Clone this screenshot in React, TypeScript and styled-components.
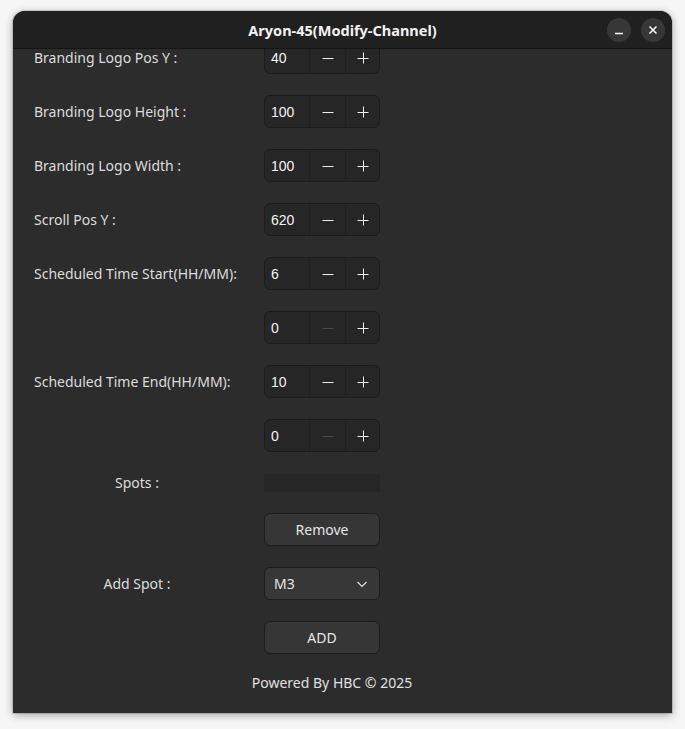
import React, { useLayoutEffect, useRef } from 'react';
import styled, { createGlobalStyle } from 'styled-components';

const GlobalStyle = createGlobalStyle`
  html, body {
    margin: 0;
    padding: 0;
    background: #f6f6f6;
    font-family: "Noto Sans", "DejaVu Sans", sans-serif;
  }
`;

const Desktop = styled.div`
  width: 685px;
  height: 729px;
  padding: 11px 13px 16px 13px;
  box-sizing: border-box;
  display: flex;
`;

const Window = styled.div`
  flex: 1;
  display: flex;
  flex-direction: column;
  border-radius: 12px 12px 0 0;
  overflow: hidden;
  background: #2c2c2c;
  box-shadow: 0 2px 8px rgba(0, 0, 0, 0.35), 0 0 0 1px rgba(0, 0, 0, 0.12);
`;

const TitleBar = styled.div`
  height: 37px;
  flex: none;
  background: #202020;
  border-bottom: 1px solid #141414;
  display: grid;
  grid-template-columns: 1fr auto 1fr;
  align-items: center;
  padding: 0 7px;
`;

const Title = styled.div`
  grid-column: 2;
  color: #f2f2f2;
  font-weight: 700;
  font-size: 14.5px;
`;

const Controls = styled.div`
  grid-column: 3;
  justify-self: end;
  display: flex;
  gap: 10px;
`;

const CircleButton = styled.button`
  width: 24px;
  height: 24px;
  border-radius: 50%;
  border: none;
  padding: 0;
  background: #373737;
  color: #ffffff;
  display: flex;
  align-items: center;
  justify-content: center;
`;

const Scroller = styled.div`
  flex: 1;
  overflow-y: auto;
  scrollbar-width: none;
  &::-webkit-scrollbar {
    display: none;
  }
`;

const Form = styled.div`
  display: grid;
  grid-template-columns: 206px 116px 1fr;
  column-gap: 24px;
  row-gap: 21px;
  padding: 22px 42px 22px 21px;
  align-items: center;
`;

const Label = styled.div<{ $center?: boolean }>`
  color: #dcdcdc;
  font-size: 14px;
  grid-column: 1;
  justify-self: ${p => (p.$center ? 'center' : 'start')};
`;

const Cell = styled.div`
  grid-column: 2;
`;

const Spin = styled.div`
  display: grid;
  grid-template-columns: 44px 36px 1fr;
  height: 33px;
  box-sizing: border-box;
  border: 1px solid #1b1b1b;
  border-radius: 6px;
  background: #262626;
  overflow: hidden;
`;

const SpinValue = styled.div`
  display: flex;
  align-items: center;
  padding-left: 6px;
  color: #f4f4f4;
  font-family: "Liberation Sans", Arial, sans-serif;
  font-size: 14px;
`;

const SpinButton = styled.div<{ $disabled?: boolean }>`
  display: flex;
  align-items: center;
  justify-content: center;
  border-left: 1px solid #1f1f1f;
  color: ${p => (p.$disabled ? '#4a4a4a' : '#f0f0f0')};
`;

const ListBox = styled.div`
  height: 18px;
  background: #262626;
`;

const Button = styled.button`
  width: 116px;
  height: 33px;
  box-sizing: border-box;
  border: 1px solid #1c1c1c;
  border-radius: 6px;
  background: #363636;
  color: #e6e6e6;
  font-family: "Noto Sans", sans-serif;
  font-size: 14px;
  padding: 0;
  display: block;
`;

const Dropdown = styled.div`
  height: 33px;
  box-sizing: border-box;
  border: 1px solid #1c1c1c;
  border-radius: 6px;
  background: #373737;
  color: #e6e6e6;
  font-size: 14px;
  display: flex;
  align-items: center;
  justify-content: space-between;
  padding: 0 11px 0 9px;
`;

const Footer = styled.div`
  grid-column: 1 / -1;
  justify-self: center;
  color: #e0e0e0;
  font-size: 14px;
  line-height: 16px;
`;

const Minus = () => (
  <svg width="12" height="12" viewBox="0 0 12 12">
    <path d="M0.5 6.5h11" stroke="currentColor" strokeWidth="1" />
  </svg>
);

const Plus = () => (
  <svg width="12" height="12" viewBox="0 0 12 12">
    <path d="M0.5 6.5h11M6.5 0.5v11" stroke="currentColor" strokeWidth="1" />
  </svg>
);

const Chevron = () => (
  <svg width="12" height="8" viewBox="0 0 12 8">
    <path d="M1.5 2l4.5 4.5L10.5 2" stroke="#e0e0e0" strokeWidth="1.2" fill="none" />
  </svg>
);

type SpinProps = { value: number; min?: boolean };

const SpinBox = ({ value, min }: SpinProps) => (
  <Spin>
    <SpinValue>{value}</SpinValue>
    <SpinButton $disabled={min}>
      <Minus />
    </SpinButton>
    <SpinButton>
      <Plus />
    </SpinButton>
  </Spin>
);

const rows: { label: string; value: number; min?: boolean }[] = [
  { label: 'Branding Logo Pos Y :', value: 40 },
  { label: 'Branding Logo Height :', value: 100 },
  { label: 'Branding Logo Width :', value: 100 },
  { label: 'Scroll Pos Y :', value: 620 },
  { label: 'Scheduled Time Start(HH/MM):', value: 6 },
  { label: '', value: 0, min: true },
  { label: 'Scheduled Time End(HH/MM):', value: 10 },
  { label: '', value: 0, min: true },
];

const App: React.FC = () => {
  const scrollRef = useRef<HTMLDivElement>(null);

  useLayoutEffect(() => {
    const el = scrollRef.current;
    if (el) el.scrollTop = el.scrollHeight;
  }, []);

  return (
    <>
      <GlobalStyle />
      <Desktop>
        <Window>
          <TitleBar>
            <Title>Aryon-45(Modify-Channel)</Title>
            <Controls>
              <CircleButton aria-label="minimize">
                <svg width="10" height="10" viewBox="0 0 10 10">
                  <path d="M1 8.5h8" stroke="#fff" strokeWidth="1.3" />
                </svg>
              </CircleButton>
              <CircleButton aria-label="close">
                <svg width="10" height="10" viewBox="0 0 10 10">
                  <path d="M1.5 1.5l7 7M8.5 1.5l-7 7" stroke="#fff" strokeWidth="1.5" />
                </svg>
              </CircleButton>
            </Controls>
          </TitleBar>
          <Scroller ref={scrollRef}>
            <Form>
              {rows.map((r, i) => (
                <React.Fragment key={i}>
                  {r.label && <Label>{r.label}</Label>}
                  <Cell>
                    <SpinBox value={r.value} min={r.min} />
                  </Cell>
                </React.Fragment>
              ))}
              <Label $center>Spots :</Label>
              <Cell>
                <ListBox />
              </Cell>
              <Cell>
                <Button>Remove</Button>
              </Cell>
              <Label $center>Add Spot :</Label>
              <Cell>
                <Dropdown>
                  <span>M3</span>
                  <Chevron />
                </Dropdown>
              </Cell>
              <Cell>
                <Button>ADD</Button>
              </Cell>
              <Footer>Powered By HBC © 2025</Footer>
            </Form>
          </Scroller>
        </Window>
      </Desktop>
    </>
  );
};

export default App;
